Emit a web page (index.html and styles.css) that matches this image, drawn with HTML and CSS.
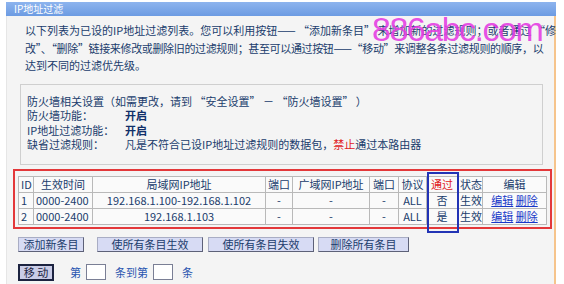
FILE: index.html
```html
<!DOCTYPE html>
<html>
<head>
    <title>IP地址过滤</title>
    <link rel="stylesheet" href="styles.css">
</head>
<body>
    <div class="frame">
        <div class="title">IP地址过滤</div>
        <div class="panel">
            <div class="intro">
                <div class="line">以下列表为已设的IP地址过滤列表。您可以利用按钮—— “添加新条目” 来增加新的过滤规则；或者通过 “修</div>
                <div class="line tight">改”、“删除”链接来修改或删除旧的过滤规则；甚至可以通过按钮——“移动”来调整各条过滤规则的顺序，以</div>
                <div class="line">达到不同的过滤优先级。</div>
            </div>

            <div class="fw">
                <div class="fw-row">防火墙相关设置（如需更改，请到 “安全设置” － “防火墙设置” ）</div>
                <div class="fw-row"><span class="fw-label">防火墙功能：</span><b>开启</b></div>
                <div class="fw-row"><span class="fw-label">IP地址过滤功能：</span><b>开启</b></div>
                <div class="fw-row"><span class="fw-label">缺省过滤规则：</span>凡是不符合已设IP地址过滤规则的数据包，<span class="deny">禁止</span>通过本路由器</div>
            </div>

            <div class="rules">
                <table class="list">
                    <colgroup>
                        <col style="width:15px">
                        <col style="width:59px">
                        <col style="width:173px">
                        <col style="width:27px">
                        <col style="width:77px">
                        <col style="width:29px">
                        <col style="width:28px">
                        <col style="width:31px">
                        <col style="width:25px">
                        <col>
                    </colgroup>
                    <tr>
                        <th class="left">ID</th>
                        <th>生效时间</th>
                        <th>局域网IP地址</th>
                        <th>端口</th>
                        <th>广域网IP地址</th>
                        <th>端口</th>
                        <th>协议</th>
                        <th class="pass">通过</th>
                        <th class="left">状态</th>
                        <th>编辑</th>
                    </tr>
                    <tr>
                        <td class="left">1</td>
                        <td class="left">0000-2400</td>
                        <td>192.168.1.100-192.168.1.102</td>
                        <td>-</td>
                        <td>-</td>
                        <td>-</td>
                        <td>ALL</td>
                        <td>否</td>
                        <td class="left">生效</td>
                        <td><a href="#">编辑</a> <a href="#">删除</a></td>
                    </tr>
                    <tr>
                        <td class="left">2</td>
                        <td class="left">0000-2400</td>
                        <td>192.168.1.103</td>
                        <td>-</td>
                        <td>-</td>
                        <td>-</td>
                        <td>ALL</td>
                        <td>是</td>
                        <td class="left">生效</td>
                        <td><a href="#">编辑</a> <a href="#">删除</a></td>
                    </tr>
                </table>
                <div class="pass-mark"></div>
            </div>

            <div class="actions">
                <button class="btn btn-add">添加新条目</button>
                <button class="btn btn-on">使所有条目生效</button>
                <button class="btn btn-off">使所有条目失效</button>
                <button class="btn btn-del">删除所有条目</button>
            </div>

            <div class="move">
                <button class="btn-move">移 动</button>
                <span class="move-text">第</span>
                <input type="text" class="move-input">
                <span class="move-text">条到第</span>
                <input type="text" class="move-input">
                <span class="move-text">条</span>
            </div>
        </div>
        <div class="watermark">886abc.com</div>
    </div>
</body>
</html>
```

FILE: styles.css
```css
body {
    margin: 0;
    background-color: #fff;
    color: #203c6c;
    font-family: "Noto Sans CJK SC", sans-serif;
    font-size: 11px;
}

.frame {
    position: relative;
    width: 550px;
    height: 282px;
    margin: 2px 0 0 6px;
    display: flex;
    flex-direction: column;
}

.title {
    height: 14px;
    line-height: 14px;
    padding-left: 8px;
    color: #fff;
    font-size: 10px;
    background: linear-gradient(#8db4ee, #6c9be2);
}

.panel {
    flex: 1;
    background-color: #f4f4f4;
    border-left: 1px solid #e6e6e6;
    border-right: 2px solid #f6c48c;
}

.intro {
    padding: 6px 0 0 18px;
    line-height: 17.5px;
}

.line {
    white-space: nowrap;
}

.tight {
    letter-spacing: -0.35px;
}

.fw {
    margin: 9px 0 0 13px;
    width: 509px;
    padding: 9px 6px 12px 6px;
    border: 1px solid #cfcfcf;
    line-height: 14.6px;
}

.fw-label {
    display: inline-block;
    width: 98px;
}

.fw b {
    color: #10306a;
}

.deny {
    color: #e0201c;
}

.rules {
    position: relative;
    margin: 4px 0 0 6px;
    width: 531px;
    padding: 5px 1px 2px 3px;
    border: 2px solid #e3383a;
}

.list {
    width: 529px;
    table-layout: fixed;
    border-collapse: collapse;
    background-color: #fafafa;
}

.list th,
.list td {
    height: 15px;
    padding: 0;
    border: 1px solid #b9b9b9;
    font-weight: normal;
    text-align: center;
    line-height: 15px;
    white-space: nowrap;
}

.list .left {
    text-align: left;
    padding-left: 2px;
}

.list .pass {
    color: #e0201c;
}

.list a {
    color: #1838c8;
}

.pass-mark {
    position: absolute;
    left: 412px;
    top: 1px;
    width: 28px;
    height: 57px;
    border: 2px solid #2233b5;
}

.actions {
    display: flex;
    margin: 8px 0 0 11px;
}

.btn {
    height: 15px;
    padding: 0;
    margin-right: 5px;
    font-family: "Noto Sans CJK SC", sans-serif;
    font-size: 11px;
    line-height: 13px;
    color: #203c6c;
    background-color: #d7dbf4;
    border: 1px solid;
    border-color: #a9adc4 #5d6178 #5d6178 #a9adc4;
}

.btn-add {
    width: 66px;
    margin-right: 13px;
}

.btn-on {
    width: 106px;
}

.btn-off {
    width: 106px;
    margin-right: 4px;
}

.btn-del {
    width: 91px;
}

.move {
    display: flex;
    align-items: center;
    margin: 12px 0 0 11px;
}

.btn-move {
    width: 36px;
    height: 17px;
    padding: 0;
    font-family: "Noto Sans CJK SC", sans-serif;
    font-size: 11px;
    line-height: 13px;
    color: #1a2240;
    background-color: #c9cce6;
    border: 2px solid #1c2340;
}

.move-text {
    color: #2a55b0;
    margin-right: 5px;
}

.move-text:first-of-type {
    margin-left: 16px;
}

.move-input {
    width: 18px;
    height: 14px;
    padding: 0;
    margin-right: 9px;
    border: 1px solid #7a7f95;
    background-color: #fff;
}

.watermark {
    position: absolute;
    left: 366px;
    top: 10px;
    font-family: "Liberation Sans", Arial, sans-serif;
    font-size: 34px;
    line-height: 34px;
    letter-spacing: -1.5px;
    color: rgba(228, 58, 226, 0.9);
    white-space: nowrap;
}
```
